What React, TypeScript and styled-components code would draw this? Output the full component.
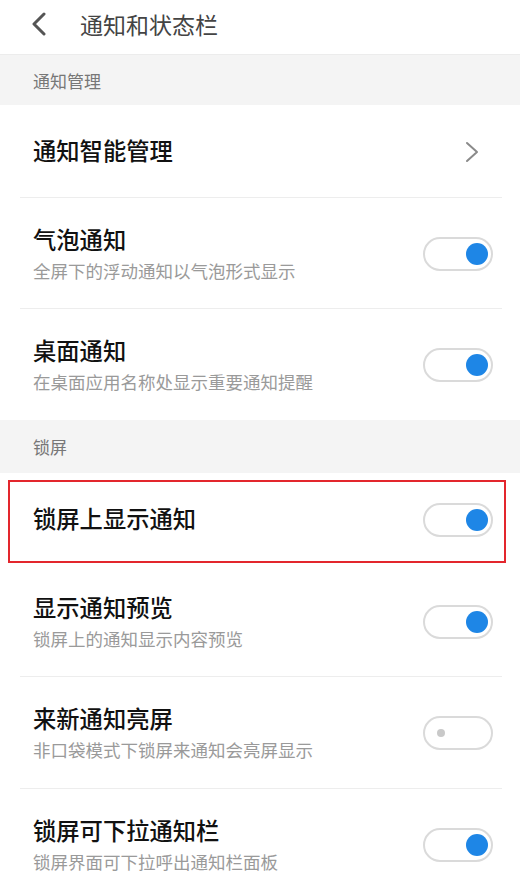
import React from "react";
import styled, { createGlobalStyle } from "styled-components";

const Global = createGlobalStyle`
  html, body { margin: 0; padding: 0; background: #fff; }
  body { font-family: "Noto Sans CJK SC", "Noto Sans", sans-serif; -webkit-font-smoothing: antialiased; }
  * { box-sizing: border-box; }
`;

const Page = styled.div`
  width: 520px;
  height: 875px;
  overflow: hidden;
  background: #fff;
  display: flex;
  flex-direction: column;
`;

const Header = styled.div`
  height: 55px;
  display: flex;
  align-items: center;
  padding-left: 30px;
  gap: 32px;
  border-bottom: 1px solid #ececec;
  flex-shrink: 0;
`;

const HeaderTitle = styled.div`
  font-size: 23px;
  color: #444;
  line-height: 1;
  margin-top: -6px;
`;

const BackButton = styled.svg`
  width: 18px;
  height: 24px;
  margin-top: -6px;
`;

const SectionHeader = styled.div<{ $h: number }>`
  height: ${(p) => p.$h}px;
  background: #f4f4f4;
  display: flex;
  align-items: center;
  padding-left: 33px;
  font-size: 17px;
  color: #777;
  flex-shrink: 0;
`;

const Row = styled.div<{ $h: number; $divider?: boolean }>`
  position: relative;
  height: ${(p) => p.$h}px;
  display: flex;
  align-items: center;
  justify-content: space-between;
  padding: 0 27px 0 33px;
  flex-shrink: 0;
  &::after {
    content: "";
    display: ${(p) => (p.$divider ? "block" : "none")};
    position: absolute;
    left: 20px;
    right: 18px;
    bottom: 0;
    height: 1px;
    background: #ededed;
  }
`;

const TextCol = styled.div`
  display: flex;
  flex-direction: column;
  margin-top: -3px;
`;

const Title = styled.div`
  font-size: 23.3px;
  font-weight: 500;
  color: #111;
  line-height: 34px;
`;

const Subtitle = styled.div`
  font-size: 17.5px;
  color: #9a9a9a;
  line-height: 24px;
  margin-top: 3px;
`;

const Highlight = styled.div`
  position: absolute;
  left: 8px;
  right: 14px;
  top: 7px;
  bottom: 3px;
  border: 2px solid #e3262d;
  pointer-events: none;
`;

const Track = styled.div<{ $on: boolean }>`
  width: 70px;
  height: 34px;
  border-radius: 17px;
  border: 2.5px solid #dadada;
  background: #fff;
  display: flex;
  align-items: center;
  justify-content: ${(p) => (p.$on ? "flex-end" : "flex-start")};
  padding: ${(p) => (p.$on ? "0 3px" : "0 12px")};
  flex-shrink: 0;
`;

const Knob = styled.div<{ $on: boolean }>`
  width: ${(p) => (p.$on ? 22 : 8)}px;
  height: ${(p) => (p.$on ? 22 : 8)}px;
  border-radius: 50%;
  background: ${(p) => (p.$on ? "#1e86e6" : "#c9c9c9")};
`;

const Chevron = styled.svg`
  width: 14px;
  height: 22px;
  margin-right: 14px;
`;

const Toggle = ({ on }: { on: boolean }) => (
  <Track $on={on}>
    <Knob $on={on} />
  </Track>
);

type Item = { title: string; sub?: string; on?: boolean; chevron?: boolean; h: number; divider?: boolean; highlight?: boolean };

const SettingRow = ({ item }: { item: Item }) => (
  <Row $h={item.h} $divider={item.divider}>
    {item.highlight && <Highlight />}
    <TextCol>
      <Title>{item.title}</Title>
      {item.sub && <Subtitle>{item.sub}</Subtitle>}
    </TextCol>
    {item.chevron ? (
      <Chevron viewBox="0 0 14 22">
        <path d="M2 2 L12 11 L2 20" fill="none" stroke="#8a8a8a" strokeWidth="2" strokeLinecap="round" strokeLinejoin="round" />
      </Chevron>
    ) : (
      <Toggle on={!!item.on} />
    )}
  </Row>
);

export default function App() {
  const group1: Item[] = [
    { title: "通知智能管理", chevron: true, h: 93, divider: true },
    { title: "气泡通知", sub: "全屏下的浮动通知以气泡形式显示", on: true, h: 111, divider: true },
    { title: "桌面通知", sub: "在桌面应用名称处显示重要通知提醒", on: true, h: 111 },
  ];
  const group2: Item[] = [
    { title: "锁屏上显示通知", on: true, h: 93, highlight: true },
    { title: "显示通知预览", sub: "锁屏上的通知显示内容预览", on: true, h: 111, divider: true },
    { title: "来新通知亮屏", sub: "非口袋模式下锁屏来通知会亮屏显示", on: false, h: 112, divider: true },
    { title: "锁屏可下拉通知栏", sub: "锁屏界面可下拉呼出通知栏面板", on: true, h: 111 },
  ];
  return (
    <Page>
      <Global />
      <Header>
        <BackButton viewBox="0 0 18 24">
          <path d="M14 2 L4 12 L14 22" fill="none" stroke="#555" strokeWidth="3" strokeLinecap="round" strokeLinejoin="round" />
        </BackButton>
        <HeaderTitle>通知和状态栏</HeaderTitle>
      </Header>
      <SectionHeader $h={50}>通知管理</SectionHeader>
      {group1.map((it) => (
        <SettingRow key={it.title} item={it} />
      ))}
      <SectionHeader $h={53}>锁屏</SectionHeader>
      {group2.map((it) => (
        <SettingRow key={it.title} item={it} />
      ))}
    </Page>
  );
}
